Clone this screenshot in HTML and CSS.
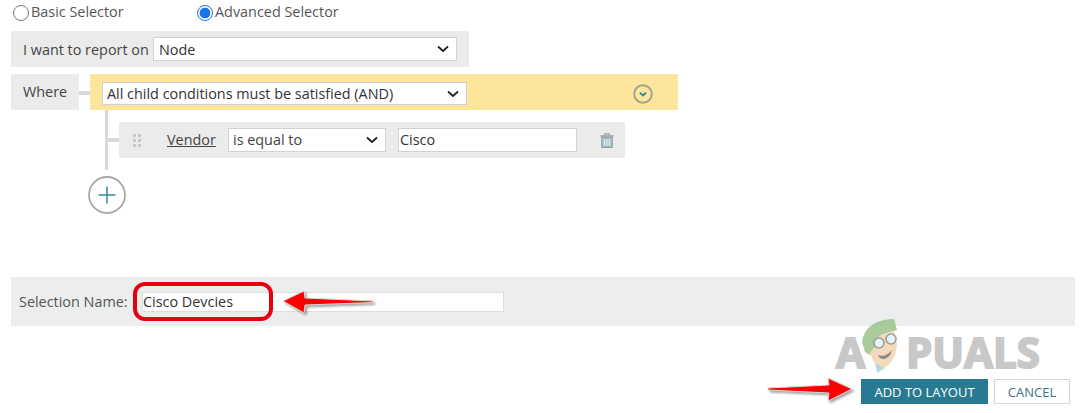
FILE: index.html
```html
<!DOCTYPE html>
<html lang="en">
<head>
    <title>Selection</title>
    <link rel="stylesheet" href="styles.css">
</head>
<body>
    <!-- Selector type -->
    <div class="selector-row">
        <label class="radio-label"><span class="radio"></span>Basic Selector</label>
        <label class="radio-label"><span class="radio checked"></span>Advanced Selector</label>
    </div>

    <div class="report-row">
        <span class="report-label">I want to report on</span>
        <div class="select report-select">Node
            <svg class="chevron" viewBox="0 0 12 8"><path d="M1 1.5l5 4.5 5-4.5" fill="none" stroke="#222" stroke-width="1.8"/></svg>
        </div>
    </div>

    <!-- Condition tree -->
    <div class="where-row">
        <div class="where-label">Where</div>
        <div class="where-link"></div>
        <div class="where-bar">
            <div class="select and-select">All child conditions must be satisfied (AND)
                <svg class="chevron" viewBox="0 0 12 8"><path d="M1 1.5l5 4.5 5-4.5" fill="none" stroke="#222" stroke-width="1.8"/></svg>
            </div>
            <svg class="collapse" viewBox="0 0 20 20">
                <circle cx="10" cy="10" r="8.8" fill="none" stroke="#a3a08f" stroke-width="1.9"/>
                <path d="M6.8 8.6l3.2 2.8 3.2-2.8" fill="none" stroke="#2f8a9c" stroke-width="1.9"/>
            </svg>
        </div>
    </div>

    <div class="tree">
        <div class="tree-line"></div>
        <div class="tree-body">
            <div class="condition-row">
                <div class="tree-tick"></div>
                <div class="condition">
                    <svg class="grip" viewBox="0 0 8 13"><path d="M0 0h3v3H0zM5 0h3v3H5zM0 5h3v3H0zM5 5h3v3H5zM0 10h3v3H0zM5 10h3v3H5z" fill="#c8c8c8"/></svg>
                    <a class="vendor" href="#">Vendor</a>
                    <div class="select op-select"><span class="op-text">is equal to</span>
                        <svg class="chevron" viewBox="0 0 12 8"><path d="M1 1.5l5 4.5 5-4.5" fill="none" stroke="#222" stroke-width="1.8"/></svg>
                    </div>
                    <div class="text-input value-input">Cisco</div>
                    <svg class="trash" viewBox="0 0 14 15">
                        <path d="M5 2V.8h4V2M.5 3h13" fill="none" stroke="#9b9b9b" stroke-width="1.3"/>
                        <path d="M1.8 4.5h10.4V14.4H1.8z" fill="#a9c8d2" stroke="#9b9b9b" stroke-width="1.2"/>
                        <path d="M4.6 6.5v6M7 6.5v6M9.4 6.5v6" stroke="#e8f0f2" stroke-width="1"/>
                    </svg>
                </div>
            </div>
        </div>
    </div>
    <div class="add-btn">
        <svg viewBox="0 0 38 38">
            <circle cx="19" cy="19" r="18" fill="#fff" stroke="#a8a8a8" stroke-width="1.8"/>
            <path d="M19 10.5v17M10.5 19h17" stroke="#2f8a9c" stroke-width="1.5"/>
        </svg>
    </div>

    <!-- Name -->
    <div class="name-row">
        <span class="name-label">Selection Name:</span>
        <div class="name-field">
            <div class="text-input name-input">Cisco Devcies</div>
            <div class="callout"></div>
            <svg class="arrow name-arrow" viewBox="0 0 92 24">
                <path d="M1 11L22 1l1 7 68 3v1.500l-68 2.500-1 8z" fill="#f00" stroke="#d8d8d8" stroke-width="1"/>
            </svg>
        </div>
    </div>

    <!-- Footer -->
    <div class="footer">
        <div class="watermark">
            <span>A</span>
            <svg class="mascot" viewBox="0 0 38 56">
                <path d="M1 24C3 10 14 1 33 1l3 11-16 5-5 12-6 8-5-3z" fill="#9cc48c"/>
                <path d="M9 34l5-5 4-11 15-5 3 14c-1 12-8 23-15 23-6 0-10-8-12-16z" fill="#f3d3b0"/>
                <path d="M14 45l10 5-8 5z" fill="#a9d3e2"/>
                <circle cx="18" cy="25" r="5" fill="#e4f1f6" stroke="#8d8d8d" stroke-width="1.6"/>
                <circle cx="30" cy="21" r="5" fill="#e4f1f6" stroke="#8d8d8d" stroke-width="1.6"/>
                <path d="M17 37c5 2 10 0 14-5-1 8-11 13-14 5z" fill="#777"/>
            </svg>
            <span class="watermark-rest">PUALS</span>
        </div>
        <div class="footer-actions">
            <svg class="arrow footer-arrow" viewBox="0 0 86 24">
                <path d="M85 11L61 0l1 7-61 3v2l61 3-1 8z" fill="#f00" stroke="#d8d8d8" stroke-width="1"/>
            </svg>
            <button class="btn-primary">ADD TO LAYOUT</button>
            <button class="btn-cancel">CANCEL</button>
        </div>
    </div>
</body>
</html>
```

FILE: styles.css
```css
body {
    font-family: 'Open Sans', sans-serif;
    font-size: 14.4px;
    margin: 0;
    padding: 0 11px;
    height: 413px;
    overflow: hidden;
    box-sizing: border-box;
    background-color: #ffffff;
    color: #444444;
}

.selector-row {
    display: flex;
    height: 31px;
    padding: 1px 0 0 2px;
    box-sizing: border-box;
}

.radio-label {
    display: flex;
    align-items: center;
    height: 21px;
    width: 184px;
    color: #555555;
}

.radio {
    width: 14px;
    height: 14px;
    border: 1px solid #777777;
    border-radius: 50%;
    margin: 3px 2px 0 0;
    flex: none;
}

.radio.checked {
    border: 1px solid #1a73e8;
    background: radial-gradient(circle, #1a73e8 0 5px, #ffffff 5.700px);
}

.report-row {
    display: flex;
    align-items: center;
    width: 458px;
    height: 36px;
    padding-left: 12px;
    box-sizing: border-box;
    background-color: #ebebeb;
}

.report-label {
    width: 130px;
    flex: none;
}

.select {
    display: flex;
    align-items: center;
    justify-content: space-between;
    box-sizing: border-box;
    height: 24px;
    padding: 0 7px 0 4px;
    background-color: #ffffff;
    border: 1px solid #d2d2d2;
    color: #333333;
}

.report-select {
    width: 304px;
    padding-left: 5px;
}

.chevron {
    width: 12px;
    height: 8px;
}

.where-row {
    display: flex;
    margin-top: 7px;
    height: 36px;
}

.where-label {
    width: 68px;
    height: 36px;
    line-height: 35px;
    padding-left: 12px;
    box-sizing: border-box;
    background-color: #ebebeb;
}

.where-link {
    width: 11px;
    height: 4px;
    margin-top: 17px;
    background-color: #d9d9d9;
}

.where-bar {
    display: flex;
    align-items: center;
    width: 588px;
    height: 36px;
    padding-left: 12px;
    box-sizing: border-box;
    background-color: #fde59c;
}

.and-select {
    width: 365px;
    height: 23px;
    margin-top: 3px;
}

.collapse {
    width: 20px;
    height: 20px;
    margin: 4px 0 0 166px;
}

.tree {
    display: flex;
    height: 60px;
}

.tree-line {
    width: 3px;
    height: 60px;
    margin-left: 94px;
    background-color: #d9d9d9;
}

.condition-row {
    display: flex;
    align-items: center;
    margin-top: 12px;
}

.tree-tick {
    width: 11px;
    height: 4px;
    background-color: #d9d9d9;
}

.condition {
    display: flex;
    align-items: center;
    width: 506px;
    height: 36px;
    padding-left: 14px;
    box-sizing: border-box;
    background-color: #ebebeb;
}

.grip {
    width: 8px;
    height: 13px;
}

.vendor {
    margin: -1px 0 0 26px;
    width: 61px;
    color: #444444;
}

.op-select {
    width: 158px;
    padding-left: 4px;
    color: #444444;
}

.op-text {
    margin-top: -2px;
}

.text-input {
    box-sizing: border-box;
    background-color: #ffffff;
    border: 1px solid #d2d2d2;
    color: #333333;
}

.value-input {
    width: 179px;
    height: 24px;
    line-height: 21px;
    margin-left: 12px;
    padding-left: 1px;
}

.trash {
    width: 14px;
    height: 15px;
    margin-left: 23px;
}

.add-btn {
    height: 38px;
    margin: 6px 0 0 77px;
}

.add-btn svg {
    width: 38px;
    height: 38px;
}

.name-row {
    display: flex;
    align-items: center;
    width: 1064px;
    height: 49px;
    margin-top: 63px;
    padding-left: 8px;
    box-sizing: border-box;
    background-color: #eceeed;
}

.name-label {
    width: 124px;
    flex: none;
    margin-top: -1px;
    color: #555555;
}

.name-field {
    position: relative;
}

.name-input {
    width: 362px;
    height: 20px;
    line-height: 17px;
    padding-left: 0;
    margin-left: -1px;
    border-color: #dddddd;
}

/* red annotations drawn over the form */
.callout {
    position: absolute;
    left: -10px;
    top: -10px;
    width: 132px;
    height: 31px;
    border: 4px solid #e8000f;
    border-radius: 12px;
}

.arrow {
    position: absolute;
    filter: drop-shadow(2px 2px 1px rgba(0, 0, 0, 0.35));
}

.name-arrow {
    left: 139px;
    top: -2px;
    width: 92px;
    height: 24px;
}

.footer {
    position: relative;
    height: 74px;
}

.watermark {
    position: absolute;
    left: 825px;
    top: 1px;
    display: flex;
    align-items: flex-start;
    font-size: 42px;
    font-weight: 700;
    line-height: 50px;
    color: #c8c8c8;
    -webkit-text-stroke: 2px #c8c8c8;
}

.mascot {
    flex: none;
    width: 38px;
    height: 56px;
    margin: -9px 7px 0 -4px;
    opacity: 0.85;
}

.footer-actions {
    position: absolute;
    right: 1px;
    top: 53px;
    display: flex;
    align-items: center;
}

.footer-arrow {
    top: -1px;
    left: -94px;
    width: 86px;
    height: 24px;
}

.btn-primary {
    width: 127px;
    height: 25px;
    padding: 0;
    border: none;
    background-color: #287a93;
    color: #ffffff;
    font: 13px 'Open Sans', sans-serif;
}

.btn-cancel {
    width: 76px;
    height: 25px;
    margin-left: 6px;
    padding: 0;
    background-color: #ffffff;
    border: 1px solid #d5d5d5;
    color: #3d7488;
    font: 13px 'Open Sans', sans-serif;
}
```
